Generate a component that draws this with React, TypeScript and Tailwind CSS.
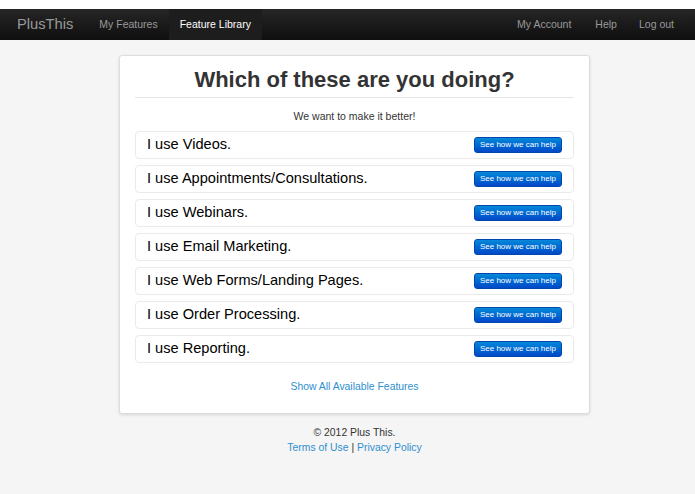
import React from 'react'

const items = [
  'I use Videos.',
  'I use Appointments/Consultations.',
  'I use Webinars.',
  'I use Email Marketing.',
  'I use Web Forms/Landing Pages.',
  'I use Order Processing.',
  'I use Reporting.'
]

const App: React.FC = () => {
  return (
    <div
      className="min-h-screen bg-[#f5f5f5] pt-[9px] text-[#333]"
      style={{ fontFamily: '"Liberation Sans", Arial, sans-serif' }}
    >
      {/* top white strip */}
      <div className="absolute top-0 left-0 right-0 h-[9px] bg-white" />

      <nav className="flex h-[31px] items-stretch bg-gradient-to-b from-[#262626] to-[#0f0f0f] pl-[6px] pr-[10px]">
        <a className="flex items-center px-[11px] text-[14.7px] text-[#999]">PlusThis</a>
        <ul className="ml-[4px] flex items-stretch text-[10.5px]">
          <li className="flex items-center px-[11px] text-[#999]">My Features</li>
          <li className="flex items-center bg-[#1d1d1d] px-[11px] text-white">Feature Library</li>
        </ul>
        <ul className="ml-auto flex items-stretch text-[10.5px] text-[#999]">
          <li className="flex items-center pl-[11px] pr-[13px]">My Account</li>
          <li className="flex items-center px-[11px]">Help</li>
          <li className="flex items-center px-[11px]">Log out</li>
        </ul>
      </nav>

      <main className="pl-[14px] pt-[15px]">
        <div className="mx-auto w-[471px] rounded-[3px] border border-[#ddd] bg-white px-[15px] pb-[20px] pt-[11px] shadow-[0_1px_3px_rgba(0,0,0,0.12)]">
          <h1 className="border-b border-[#e5e5e5] pb-[4px] text-center text-[22px] font-bold leading-[26px] text-[#333]">
            Which of these are you doing?
          </h1>
          <p className="mt-[9px] text-center text-[10.5px] leading-[18px] text-[#333]">
            We want to make it better!
          </p>
          <div className="mt-[6px] flex flex-col gap-[6px]">
            {items.map((t) => (
              <div
                key={t}
                className="flex h-[28px] items-center justify-between rounded-[4px] border border-[#eaeaea] pl-[11px] pr-[11px]"
              >
                <span className="text-[14.6px] text-black">{t}</span>
                <button className="h-[16px] rounded-[3px] border border-[#0048b0] bg-gradient-to-b from-[#0a88da] to-[#0448c8] px-[5px] text-[8px] leading-[14px] text-white">
                  See how we can help
                </button>
              </div>
            ))}
          </div>
          <div className="mt-[18px] text-center text-[10.4px] leading-[12px] text-[#2f8fcf]">
            Show All Available Features
          </div>
        </div>

        <footer className="mt-[11px] text-center text-[10.4px] leading-[15px] text-[#333]">
          <div>© 2012 Plus This.</div>
          <div>
            <a className="text-[#2f8fcf]">Terms of Use</a> | <a className="text-[#2f8fcf]">Privacy Policy</a>
          </div>
        </footer>
      </main>
    </div>
  )
}

export default App
